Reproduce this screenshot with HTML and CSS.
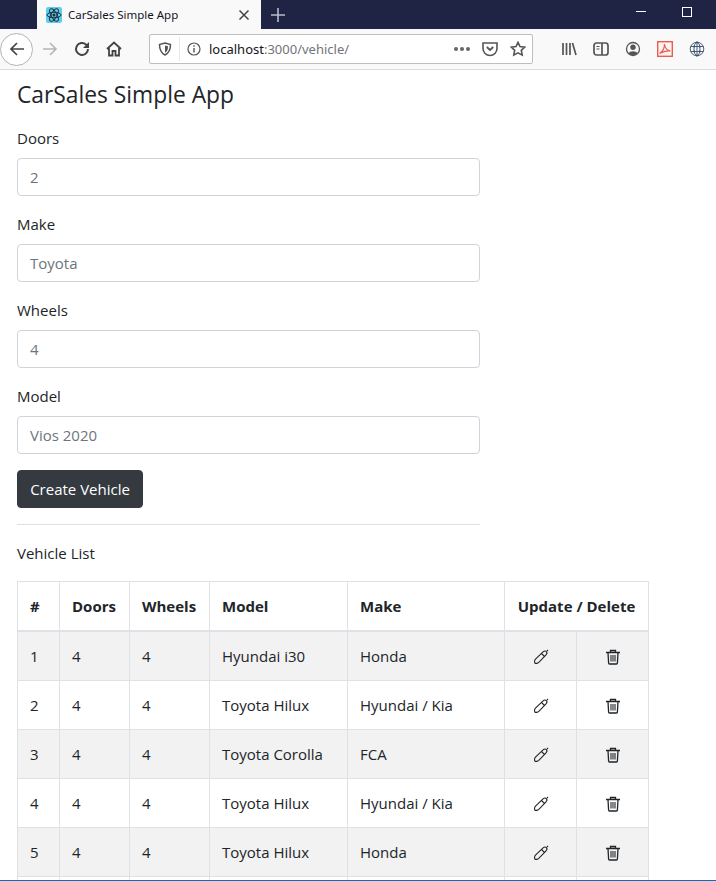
FILE: index.html
```html
<!DOCTYPE html>
<html lang="en">
<head>
    <meta charset="UTF-8">
    <meta name="viewport" content="width=device-width, initial-scale=1.0">
    <title>CarSales Simple App</title>
    <link rel="stylesheet" href="styles.css">
</head>
<body>

<!-- Browser chrome -->
<div class="tabbar">
    <div class="tab">
        <svg class="favicon" viewBox="0 0 16 16" width="16" height="16">
            <rect width="16" height="16" rx="2" fill="#5ccfee"/>
            <g fill="none" stroke="#20303a" stroke-width="1">
                <ellipse cx="8" cy="8" rx="7" ry="2.8"/>
                <ellipse cx="8" cy="8" rx="7" ry="2.8" transform="rotate(60 8 8)"/>
                <ellipse cx="8" cy="8" rx="7" ry="2.8" transform="rotate(120 8 8)"/>
            </g>
            <circle cx="8" cy="8" r="1.5" fill="#20303a"/>
        </svg>
        <span class="tab-title">CarSales Simple App</span>
        <svg class="tab-close" viewBox="0 0 12 12" width="12" height="12"><path d="M1.5 1.5l9 9M10.5 1.5l-9 9" stroke="#444" stroke-width="1.5" fill="none"/></svg>
    </div>
    <svg class="new-tab" viewBox="0 0 14 14" width="14" height="14"><path d="M7 0v14M0 7h14" stroke="#b9bcc8" stroke-width="1.6" fill="none"/></svg>
    <div class="window-btns">
        <span class="win-min"></span>
        <span class="win-max"></span>
    </div>
</div>

<div class="navbar">
    <div class="back-btn">
        <svg viewBox="0 0 16 16" width="16" height="16"><path d="M15 8H2M8 2L2 8l6 6" stroke="#444" stroke-width="1.7" fill="none"/></svg>
    </div>
    <svg class="nav-icon" viewBox="0 0 16 16" width="16" height="16"><path d="M1 8h13M8 2l6 6-6 6" stroke="#b5b5b5" stroke-width="1.6" fill="none"/></svg>
    <svg class="nav-icon" viewBox="0 0 16 16" width="16" height="16"><path d="M14 8a6 6 0 1 1-2-4.500L14.500 5.500" stroke="#444" stroke-width="2" fill="none"/><path d="M15 1v6H9z" fill="#444"/></svg>
    <svg class="nav-icon" viewBox="0 0 16 16" width="16" height="16"><path d="M1 8l7-6.500L15 8M3 7v7.500h3.500V10h3v4.500H13V7" stroke="#444" stroke-width="1.800" fill="none"/></svg>
    <div class="urlbar">
        <svg class="url-shield" viewBox="0 0 14 14" width="14" height="14"><path d="M7 1l5.500 1.500C12.500 8 11 11 7 13 3 11 1.500 8 1.500 2.500z" fill="none" stroke="#555" stroke-width="1.500"/><path d="M7 3.500l3 .8C10 8 9 9.500 7 10.800z" fill="#555"/></svg>
        <span class="url-sep"></span>
        <svg class="url-info" viewBox="0 0 14 14" width="14" height="14"><circle cx="7" cy="7" r="6" fill="none" stroke="#555" stroke-width="1.200"/><path d="M7 6v4.500M7 3.300v1.400" stroke="#555" stroke-width="1.400"/></svg>
        <span class="url-text">localhost<span class="url-dim">:3000/vehicle/</span></span>
        <span class="url-dots"><i></i><i></i><i></i></span>
        <svg class="url-pocket" viewBox="0 0 16 16" width="16" height="16"><path d="M1 2h14v5.500a7 7 0 0 1-14 0z" fill="none" stroke="#555" stroke-width="1.600"/><path d="M4.800 6L8 9l3.200-3" fill="none" stroke="#555" stroke-width="1.800"/></svg>
        <svg class="url-star" viewBox="0 0 16 16" width="16" height="16"><path d="M8 1.300l2 4.300 4.700.6-3.400 3.200.9 4.700L8 11.800l-4.200 2.300.9-4.700L1.300 6.200 6 5.600z" fill="none" stroke="#555" stroke-width="1.600"/></svg>
    </div>
    <div class="nav-right">
        <svg viewBox="0 0 16 16" width="16" height="16"><path d="M2 2v12M5.500 2v12M9 2v12M11.500 2l3.500 12" stroke="#555" stroke-width="1.700" fill="none"/></svg>
        <svg viewBox="0 0 16 16" width="16" height="16"><rect x="1" y="2" width="14" height="12" rx="2.500" fill="none" stroke="#555" stroke-width="1.700"/><path d="M9 2v12" stroke="#555" stroke-width="1.700"/><path d="M3.500 5.500h3M3.500 8h3" stroke="#555"/></svg>
        <svg viewBox="0 0 16 16" width="16" height="16"><circle cx="8" cy="8" r="6.500" fill="none" stroke="#555" stroke-width="1.300"/><circle cx="8" cy="6.300" r="2.700" fill="#555"/><path d="M3.500 12.500c1-3 8-3 9 0-2 2-7 2-9 0z" fill="#555"/></svg>
        <svg viewBox="0 0 16 16" width="16" height="16"><rect x="0.700" y="0.700" width="14.600" height="14.600" fill="#fdf3f2" stroke="#ee5a4e" stroke-width="1.400"/><path d="M2.500 12.500C6 10.500 7.500 6.500 7.500 3c.5 4 2.500 6.500 6 7-3.500-.6-7 .2-11 2.500z" fill="none" stroke="#ee5a4e" stroke-width="1.200"/></svg>
        <svg viewBox="0 0 16 16" width="16" height="16"><g fill="none" stroke="#4d5f7c" stroke-width="1"><circle cx="8" cy="8" r="6.800"/><ellipse cx="8" cy="8" rx="3" ry="6.800"/><path d="M1.500 5.500h13M1.500 10.500h13M8 1v14"/></g><g fill="#3f5068"><circle cx="5.200" cy="5.500" r="1"/><circle cx="10.800" cy="5.500" r="1"/><circle cx="5.200" cy="10.500" r="1"/><circle cx="10.800" cy="10.500" r="1"/><circle cx="8" cy="1.500" r="1"/><circle cx="8" cy="14.500" r="1"/></g></svg>
    </div>
</div>

<!-- Page -->
<div class="container">
    <h4 class="app-title">CarSales Simple App</h4>

    <form class="vehicle-form">
        <div class="form-group">
            <label>Doors</label>
            <input class="form-control" type="text" placeholder="2">
        </div>
        <div class="form-group">
            <label>Make</label>
            <input class="form-control" type="text" placeholder="Toyota">
        </div>
        <div class="form-group">
            <label>Wheels</label>
            <input class="form-control" type="text" placeholder="4">
        </div>
        <div class="form-group">
            <label>Model</label>
            <input class="form-control" type="text" placeholder="Vios 2020">
        </div>
        <button class="btn-dark" type="button">Create Vehicle</button>
    </form>

    <hr class="divider">
    <p class="list-title">Vehicle List</p>

    <table class="vehicle-table">
        <colgroup>
            <col class="col-id"><col class="col-doors"><col class="col-wheels"><col class="col-model"><col class="col-make"><col class="col-update"><col class="col-delete">
        </colgroup>
        <thead>
            <tr>
                <th>#</th>
                <th>Doors</th>
                <th>Wheels</th>
                <th>Model</th>
                <th>Make</th>
                <th colspan="2" class="center">Update / Delete</th>
            </tr>
        </thead>
        <tbody id="vehicleRows"></tbody>
    </table>
</div>

<div class="status-line"></div>

<script>
    const vehicles = [
        [1, 4, 4, 'Hyundai i30', 'Honda'],
        [2, 4, 4, 'Toyota Hilux', 'Hyundai / Kia'],
        [3, 4, 4, 'Toyota Corolla', 'FCA'],
        [4, 4, 4, 'Toyota Hilux', 'Hyundai / Kia'],
        [5, 4, 4, 'Toyota Hilux', 'Honda']
    ];

    const pencil = '<svg viewBox="0 0 16 16" width="16" height="16"><path d="M9.800 3.200c1.300-1.200 3-1.200 3.600-.6s.6 2.300-.6 3.600l-7 7.200c-1.100 1-3.200 1.300-3.900.6s-.4-2.800.6-3.900zM8.500 4.500l3.400 3.400M14 2l1-1" fill="none" stroke="#212529" stroke-width="1.100"/></svg>';
    const trash = '<svg viewBox="0 0 16 16" width="16" height="16"><path d="M1 3.500h14M5.500 3V1.500h5V3M3 3.500l.6 10.500a1 1 0 0 0 1 1h6.800a1 1 0 0 0 1-1L13 3.500" fill="none" stroke="#212529" stroke-width="1.300"/><path d="M6 6v6.500M8 6v6.500M10 6v6.500" stroke="#212529" stroke-width="1.100"/></svg>';

    const rows = document.getElementById('vehicleRows');
    vehicles.forEach(v => {
        const row = rows.insertRow();
        v.forEach(value => {
            row.insertCell().textContent = value;
        });
        const edit = row.insertCell();
        edit.className = 'center';
        edit.innerHTML = pencil;
        const del = row.insertCell();
        del.className = 'center';
        del.innerHTML = trash;
    });

    // next row starts at the fold, only its borders show
    const lastRow = rows.insertRow();
    for (let i = 0; i < 7; i++) {
        lastRow.insertCell().className = 'empty-cell';
    }
</script>

</body>
</html>
```

FILE: styles.css
```css
* {
    box-sizing: border-box;
}

html, body {
    height: 881px;
    overflow: hidden;
}

body {
    margin: 0;
    font-family: "Open Sans", "Noto Sans", sans-serif;
    font-size: 15px;
    color: #212529;
    background: #fff;
}

/* browser chrome */
.tabbar {
    height: 29px;
    background: #1f2445;
    display: flex;
    align-items: center;
    padding-left: 37px;
}

.tab {
    width: 224px;
    height: 29px;
    background: #f9f9fa;
    display: flex;
    align-items: center;
    padding-left: 9px;
}

.favicon {
    flex: none;
}

.tab-title {
    margin-left: 6px;
    font-family: "Noto Sans", sans-serif;
    font-size: 11.500px;
    color: #15141a;
}

.tab-close {
    margin-left: auto;
    margin-right: 11px;
}

.new-tab {
    margin-left: 10px;
}

.window-btns {
    margin-left: auto;
    display: flex;
    align-items: center;
    height: 29px;
}

.win-min {
    width: 10px;
    height: 1px;
    background: #fff;
    margin-right: 36px;
    margin-bottom: 6px;
}

.win-max {
    width: 10px;
    height: 10px;
    border: 1px solid #fff;
    margin-right: 24px;
    margin-bottom: 6px;
}

.navbar {
    height: 41px;
    background: #f9f9fa;
    border-bottom: 1px solid #dcdcde;
    display: flex;
    align-items: center;
    position: relative;
}

.back-btn {
    width: 33px;
    height: 33px;
    border: 1px solid #b4b4b4;
    border-radius: 50%;
    background: #fff;
    display: flex;
    align-items: center;
    justify-content: center;
}

.nav-icon {
    margin-left: 9px;
    flex: none;
}

.navbar .nav-icon + .nav-icon {
    margin-left: 16px;
}

.urlbar {
    width: 384px;
    height: 30px;
    margin-left: 27px;
    background: #fff;
    border: 1px solid #bebebe;
    border-radius: 2px;
    display: flex;
    align-items: center;
    padding-left: 8px;
    font-family: "Noto Sans", sans-serif;
    font-size: 13px;
}

.url-sep {
    width: 1px;
    height: 24px;
    background: #e6e6e8;
    margin: 0 7px 0 7px;
}

.url-text {
    margin-left: 8px;
    color: #15141a;
}

.url-dim {
    color: #73737a;
}

.url-dots {
    margin-left: auto;
    display: flex;
    gap: 2px;
}

.url-dots i {
    width: 4px;
    height: 4px;
    border-radius: 50%;
    background: #666;
}

.url-pocket {
    margin-left: 12px;
}

.url-star {
    margin-left: 12px;
    margin-right: 6px;
}

.nav-right {
    display: flex;
    align-items: center;
    gap: 16px;
    margin-left: 28px;
}

/* page */
.container {
    padding: 10px 17px 0;
}

.app-title {
    margin: 0 0 16px;
    font-size: 22.800px;
    font-weight: 400;
    line-height: 30px;
}

.vehicle-form {
    width: 463px;
}

.form-group {
    margin-bottom: 16px;
}

.form-group label {
    display: block;
    margin-bottom: 8px;
    line-height: 24px;
    height: 24px;
}

.form-control {
    display: block;
    width: 100%;
    height: 38px;
    padding: 6px 12px;
    border: 1px solid #ced4da;
    border-radius: 4px;
    font: inherit;
    color: #495057;
}

.form-control::placeholder {
    color: #6c757d;
    opacity: 1;
}

.btn-dark {
    display: block;
    height: 38px;
    width: 126px;
    padding: 0;
    border: 1px solid #343a40;
    border-radius: 4px;
    background: #343a40;
    color: #fff;
    font: inherit;
}

.divider {
    width: 463px;
    margin: 16px 0;
    border: 0;
    border-top: 1px solid #dfdfdf;
}

.list-title {
    margin: 0 0 16px;
    line-height: 24px;
}

.vehicle-table {
    width: 631px;
    table-layout: fixed;
    border-collapse: collapse;
}

.col-id { width: 42px; }
.col-doors { width: 70px; }
.col-wheels { width: 80px; }
.col-model { width: 138px; }
.col-make { width: 157px; }
.col-update { width: 72px; }
.col-delete { width: 72px; }

.vehicle-table th,
.vehicle-table td {
    border: 1px solid #dee2e6;
    padding: 12px;
    line-height: 24px;
    text-align: left;
    white-space: nowrap;
    vertical-align: middle;
}

.vehicle-table th {
    border-bottom-width: 2px;
    font-weight: 700;
}

.vehicle-table td svg {
    display: block;
    margin: 1px auto -1px;
}

.vehicle-table td.empty-cell {
    height: 49px;
}

.vehicle-table tbody tr:nth-child(odd) {
    background: #f2f2f2;
}

.vehicle-table .center {
    text-align: center;
}

.status-line {
    position: fixed;
    left: 0;
    right: 0;
    bottom: 0;
    height: 1px;
    background: #0a6ebd;
}
```
